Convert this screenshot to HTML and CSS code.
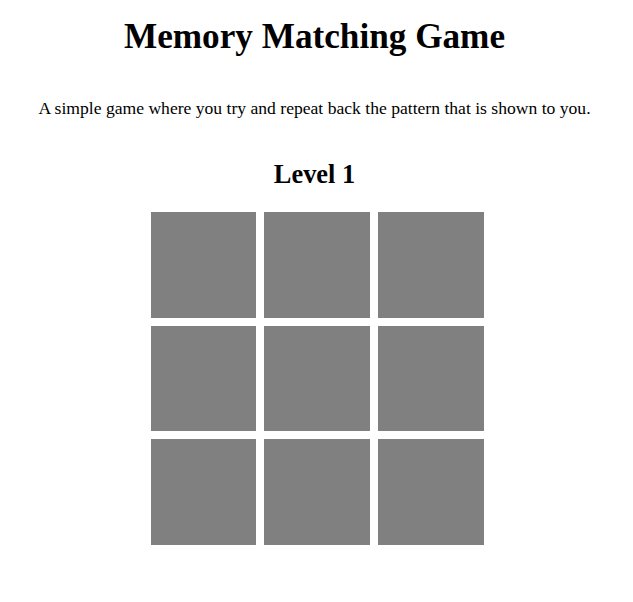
FILE: index.html
```html
<!DOCTYPE html>
<html>
<head>
<meta charset="utf-8">
<title>Memory Matching Game</title>
<link rel="stylesheet" href="styles.css">
</head>
<body>
<h1 class="title">Memory Matching Game</h1>
<p class="intro">A simple game where you try and repeat back the pattern that is shown to you.</p>
<h2 class="level">Level 1</h2>
<div class="board">
  <div class="tile"></div>
  <div class="tile"></div>
  <div class="tile"></div>
  <div class="tile"></div>
  <div class="tile"></div>
  <div class="tile"></div>
  <div class="tile"></div>
  <div class="tile"></div>
  <div class="tile"></div>
</div>
</body>
</html>
```
FILE: styles.css
```css
body {
  margin: 0;
  padding: 0 12px 0 8px;
  font-family: "Liberation Serif", "Times New Roman", serif;
  color: #000;
  background: #fff;
  text-align: center;
}
.title {
  font-size: 35.2px;
  margin: 17px 0 41px;
}
.intro {
  font-size: 17.6px;
  margin: 0 0 40px;
}
.level {
  font-size: 26.4px;
  margin: 0 0 21.5px;
}
.board {
  display: grid;
  grid-template-columns: 105px 106px 106px;
  grid-template-rows: 106px 105px 106px;
  gap: 8px;
  width: 333px;
  margin-left: calc(50% - 163.5px);
}
.tile {
  background: #808080;
}
```
